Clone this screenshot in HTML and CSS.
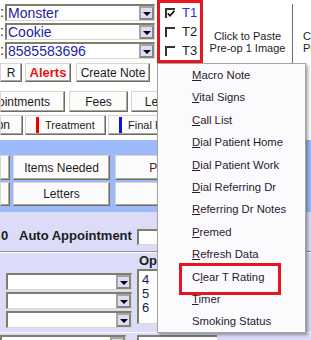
FILE: index.html
```html
<!DOCTYPE html>
<html lang="en">
<head>
    <meta charset="UTF-8">
    <title>Patient Chart</title>
    <link rel="stylesheet" href="styles.css">
</head>
<body>
    <div class="header">
        <div class="fields">
            <div class="field"><span class="lbl">:</span><div class="combo"><span class="val">Monster</span><span class="drop"></span></div></div>
            <div class="field"><span class="lbl">:</span><div class="combo"><span class="val">Cookie</span><span class="drop"></span></div></div>
            <div class="field"><span class="lbl">:</span><div class="combo"><span class="val">8585583696</span><span class="drop"></span></div></div>
        </div>
        <div class="teeth">
            <div class="chk">
                <span class="box"><svg width="8" height="8" viewBox="0 0 8 8"><path d="M0.8 3.4 L3 5.8 L7.4 0.8" fill="none" stroke="#111" stroke-width="1.7"/></svg></span>
                <span class="chk-label on">T1</span>
            </div>
            <div class="chk"><span class="box"></span><span class="chk-label">T2</span></div>
            <div class="chk"><span class="box"></span><span class="chk-label">T3</span></div>
        </div>
        <div class="paste">Click to Paste<br>Pre-op 1 Image</div>
        <div class="paste next">Click to Paste<br>Pre-op 2 Image</div>
    </div>

    <div class="btnrow row-actions">
        <div class="btn b-r">R</div>
        <div class="btn b-alerts">Alerts</div>
        <div class="btn b-note">Create Note</div>
    </div>
    <div class="btnrow row-tabs">
        <div class="btn clip b-appt">Appointments</div>
        <div class="btn b-fees">Fees</div>
        <div class="btn b-ledger">Ledger</div>
    </div>
    <div class="btnrow row-stages">
        <div class="btn clip b-consult">Consultation</div>
        <div class="btn stage b-treat"><span class="mark red"></span>Treatment</div>
        <div class="btn stage b-final"><span class="mark blue"></span>Final Review</div>
    </div>

    <div class="band">
        <div class="btnrow row-a">
            <div class="btn b-small"></div>
            <div class="btn b-wide">Items Needed</div>
            <div class="btn b-wide2 warm">Procedures</div>
        </div>
        <div class="btnrow row-b">
            <div class="btn b-small"></div>
            <div class="btn b-wide">Letters</div>
            <div class="btn b-wide2"></div>
        </div>
    </div>

    <div class="lower">
        <div class="auto-row">
            <span class="count">0</span>
            <span class="auto-label">Auto Appointment</span>
            <span class="input"></span>
        </div>
        <div class="groove"></div>
        <div class="ops">
            <div class="op-combos">
                <div class="combo low"><span class="val"></span><span class="drop"></span></div>
                <div class="combo low"><span class="val"></span><span class="drop"></span></div>
                <div class="combo low"><span class="val"></span><span class="drop"></span></div>
            </div>
            <div class="op-list">
                <div class="op-title">Op</div>
                <div class="listbox">
                    <div>4</div>
                    <div>5</div>
                    <div>6</div>
                </div>
            </div>
        </div>
        <div class="ops-next">
            <div class="combo low"><span class="val"></span><span class="drop"></span></div>
            <div class="listbox short"></div>
        </div>
    </div>

    <div class="menu">
        <div class="item"><u>M</u>acro Note</div>
        <div class="item"><u>V</u>ital Signs</div>
        <div class="item"><u>C</u>all List</div>
        <div class="item"><u>D</u>ial Patient Home</div>
        <div class="item"><u>D</u>ial Patient Work</div>
        <div class="item"><u>D</u>ial Referring Dr</div>
        <div class="item"><u>R</u>eferring Dr Notes</div>
        <div class="item"><u>P</u>remed</div>
        <div class="item"><u>R</u>efresh Data</div>
        <div class="item marked">C<u>l</u>ear T Rating</div>
        <div class="item"><u>T</u>imer</div>
        <div class="item">Smoking Status</div>
    </div>
</body>
</html>
```

FILE: styles.css
```css
* {
    box-sizing: border-box;
}

body {
    margin: 0;
    width: 311px;
    height: 340px;
    overflow: hidden;
    position: relative;
    background: #ffffff;
    font-family: "Liberation Sans", Arial, sans-serif;
    font-size: 12px;
    color: #1c1c1c;
}

/* top strip: name fields, tooth checkboxes, paste buttons */
.header {
    display: flex;
    height: 63px;
}

.header > div {
    flex-shrink: 0;
}

.fields {
    width: 157px;
    padding-top: 4px;
    display: flex;
    flex-direction: column;
    gap: 2px;
}

.field {
    display: flex;
    height: 17px;
}

.lbl {
    width: 5px;
    font-size: 14px;
    line-height: 16px;
}

.combo {
    display: flex;
    flex-shrink: 0;
    width: 150px;
    height: 17px;
    background: #fff;
    border-top: 2px solid #7e7e6e;
    border-left: 2px solid #7e7e6e;
    border-right: 1px solid #d9d8d0;
    border-bottom: 1px solid #d9d8d0;
}

.combo .val {
    flex: 1;
    font-size: 14px;
    line-height: 14px;
    color: #24249e;
    padding-left: 1px;
}

.drop {
    width: 15px;
    background: #dcdcfa;
    border: 2px solid #85857a;
    border-top-color: #a6a698;
    border-left-color: #a6a698;
    display: flex;
    align-items: flex-end;
    justify-content: center;
    padding-bottom: 2px;
}

.drop::after {
    content: '';
    border-left: 4px solid transparent;
    border-right: 4px solid transparent;
    border-top: 4px solid #000;
}

.teeth {
    width: 46px;
    border: 3px solid #e5161f;
}

.chk {
    display: flex;
    align-items: center;
    height: 19px;
    padding-left: 5px;
    gap: 7px;
}

.box {
    width: 10px;
    height: 10px;
    border-top: 2px solid #333;
    border-left: 2px solid #333;
    display: flex;
    align-items: center;
    justify-content: center;
}

.chk-label {
    font-size: 13px;
}

.chk-label.on {
    color: #2b2be0;
}

.paste {
    width: 90px;
    margin-top: 4px;
    padding-top: 26px;
    font-size: 11px;
    line-height: 12px;
    text-align: center;
    white-space: nowrap;
    border-right: 1px solid #6f6f62;
}

.paste.next {
    width: 18px;
    border-right: none;
    overflow: hidden;
    text-align: left;
    padding-left: 10px;
}

/* raised buttons */
.btnrow {
    display: flex;
}

.btn {
    display: flex;
    align-items: center;
    justify-content: center;
    flex-shrink: 0;
    white-space: nowrap;
    overflow: hidden;
    background: #fcfcfc;
    border: 1px solid;
    border-color: #d8d6ce #6f6c61 #6f6c61 #d8d6ce;
    box-shadow: inset -1px -1px 0 #aaa79c;
    font-size: 12px;
}

.btn.clip {
    justify-content: flex-end;
}

.row-actions {
    height: 19px;
}

.b-r { width: 22px; }
.b-alerts { width: 46px; margin-left: 3px; color: #ee1111; font-weight: bold; font-size: 13px; }
.b-note { width: 74px; margin-left: 5px; }

.row-tabs {
    height: 21px;
    margin-top: 9px;
}

.b-appt { width: 65px; padding-right: 14px; }
.b-fees { width: 59px; margin-left: 4px; }
.b-ledger { width: 65px; margin-left: 3px; }

.row-stages {
    height: 20px;
    margin-top: 3px;
}

.b-consult { width: 23px; padding-right: 12px; }

.btn.stage {
    justify-content: flex-start;
    padding-left: 10px;
    font-size: 11px;
}

.b-treat { width: 81px; margin-left: 2px; }
.b-final { width: 90px; margin-left: 2px; }

.mark {
    width: 3px;
    height: 16px;
    margin-right: 6px;
}

.mark.red { background: #f00000; }
.mark.blue { background: #1010e8; }

.band {
    margin-top: 5px;
    padding: 15px 0 6px;
    background: #9cb9fa;
}

.row-a { height: 25px; }
.row-b { height: 24px; margin-top: 2px; }

.b-small { width: 10px; }
.b-wide { width: 97px; margin-left: 3px; }
.b-wide2 { width: 130px; margin-left: 5px; }
.warm { color: #5c1616; }

/* lavender lower panel */
.lower {
    background: #dcdcf8;
    height: 128px;
    padding-top: 17px;
}

.auto-row {
    display: flex;
    align-items: center;
    height: 16px;
    font-weight: bold;
    font-size: 13px;
}

.count {
    width: 19px;
    padding-left: 1px;
    position: relative;
    top: -2px;
}

.auto-label {
    width: 118px;
    position: relative;
    top: -2px;
}

.input {
    width: 70px;
    height: 16px;
    background: #fff;
    border-top: 2px solid #7e7e6e;
    border-left: 2px solid #7e7e6e;
    border-right: 1px solid #d9d8d0;
    border-bottom: 1px solid #d9d8d0;
}

.groove {
    margin-top: 6px;
    height: 2px;
    border-top: 1px solid #8e8ea0;
    border-bottom: 1px solid #ffffff;
}

.ops {
    display: flex;
}

.op-combos {
    width: 137px;
    padding: 20px 0 0 6px;
    display: flex;
    flex-direction: column;
    gap: 2px;
}

.combo.low {
    width: 126px;
    height: 17px;
}

.op-title {
    height: 16px;
    line-height: 16px;
    font-weight: bold;
    font-size: 13px;
    padding-left: 2px;
}

.listbox {
    width: 80px;
    height: 55px;
    background: #fff;
    border-top: 2px solid #7e7e6e;
    border-left: 2px solid #7e7e6e;
    border-bottom: 1px solid #d9d8d0;
    padding: 2px 0 0 3px;
    font-size: 13px;
    line-height: 14px;
    color: #1a1a48;
}

.ops-next {
    display: flex;
    gap: 11px;
    margin-top: 4px;
    padding-top: 2px;
    border-top: 1px solid #ffffff;
}

.listbox.short {
    height: 20px;
}

/* popup menu over the chart */
.menu {
    position: absolute;
    left: 157px;
    top: 63px;
    width: 149px;
    height: 270px;
    background: #fbfbfd;
    border: 1px solid #a5a5a5;
    box-shadow: 2px 2px 3px rgba(0, 0, 0, 0.35);
}

.item {
    position: relative;
    height: 22.4px;
    line-height: 22.4px;
    padding-left: 34px;
    font-size: 11.3px;
    color: #2a1a2e;
    white-space: nowrap;
}

.item.marked::after {
    content: '';
    position: absolute;
    left: 21px;
    top: -3px;
    width: 96px;
    height: 26px;
    border: 3px solid #e5161f;
}
```
